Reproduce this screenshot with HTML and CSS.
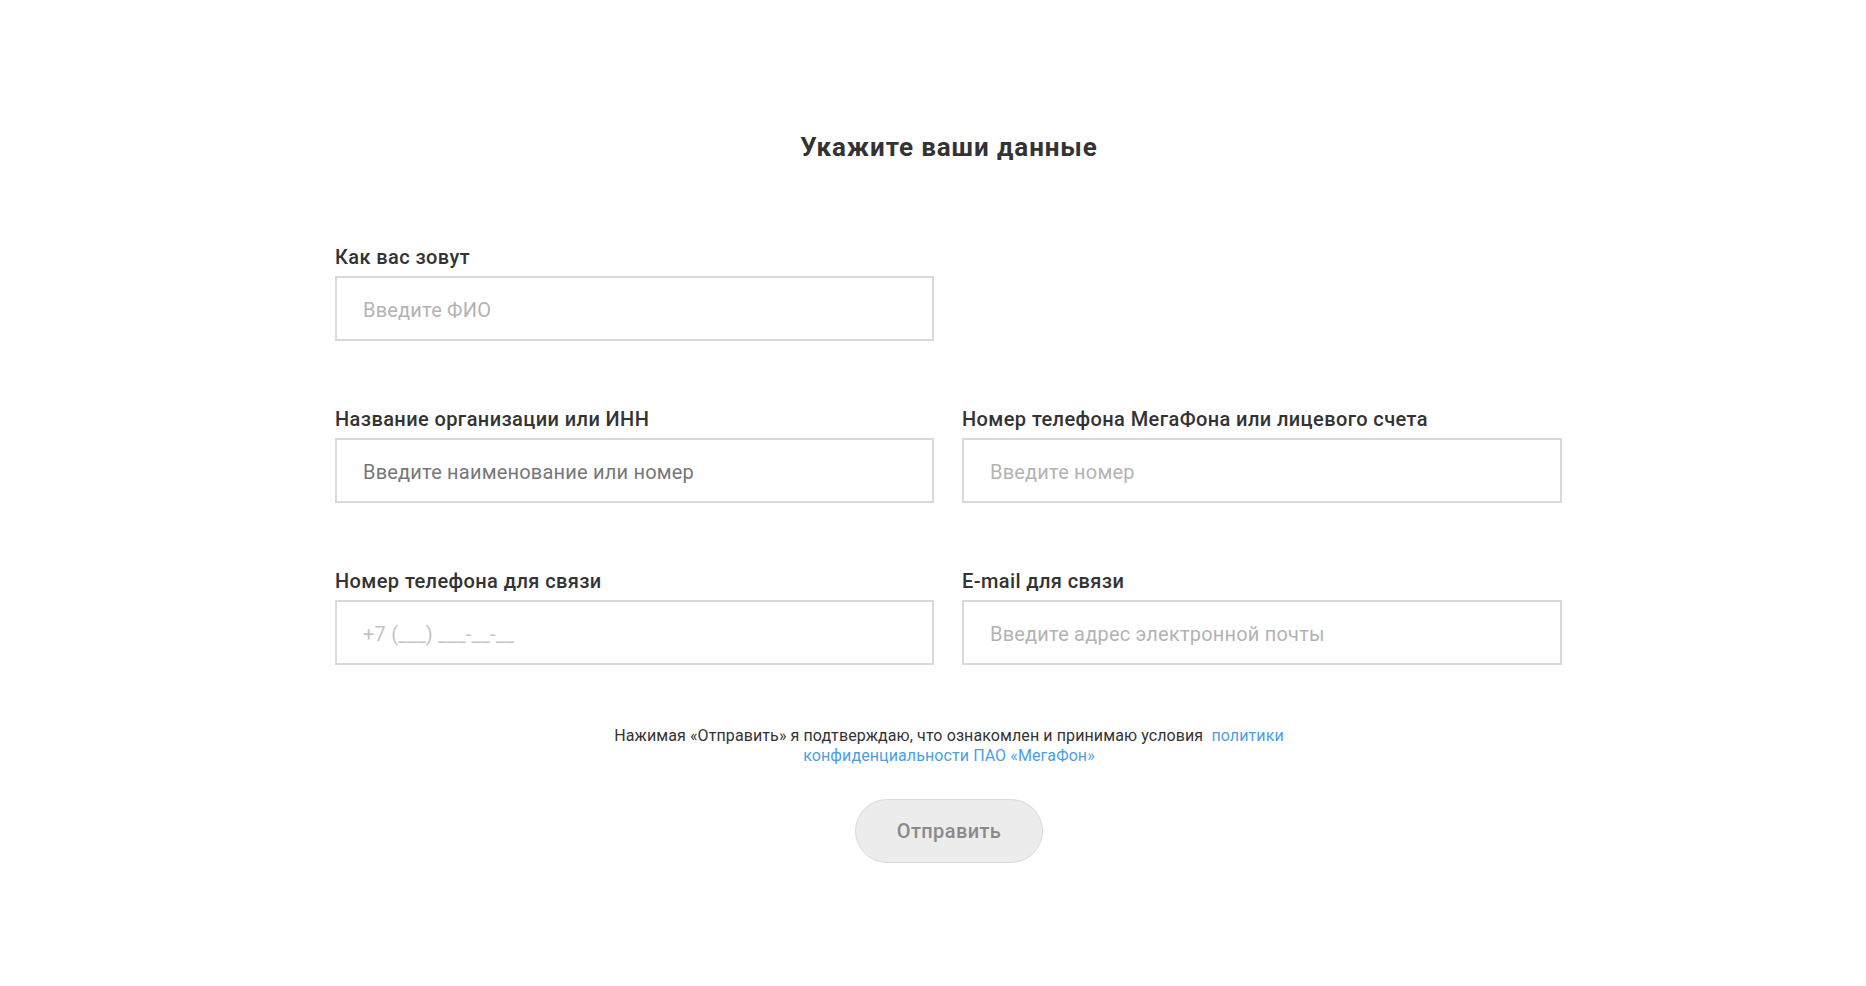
FILE: index.html
```html
<!DOCTYPE html>
<html lang="ru">
<head>
<meta charset="UTF-8">
<meta name="viewport" content="width=device-width, initial-scale=1.0">
<title>Укажите ваши данные</title>
<link rel="stylesheet" href="styles.css">
</head>
<body>

<div class="wrapper">
  <h2 class="title">Укажите ваши данные</h2>

  <form id="formulario" class="form">
    <div class="field">
      <label for="fio">Как вас зовут</label>
      <input type="text" id="fio" name="fio" placeholder="Введите ФИО">
    </div>
    <div class="field field-empty"></div>

    <div class="field">
      <label for="org">Название организации или ИНН</label>
      <input type="text" id="org" name="org" class="dark" placeholder="Введите наименование или номер">
    </div>
    <div class="field">
      <label for="account">Номер телефона МегаФона или лицевого счета</label>
      <input type="text" id="account" name="account" placeholder="Введите номер">
    </div>

    <div class="field">
      <label for="phone">Номер телефона для связи</label>
      <input type="text" id="phone" name="phone" class="light" placeholder="+7 (___) ___-__-__">
    </div>
    <div class="field">
      <label for="email">E-mail для связи</label>
      <input type="text" id="email" name="email" placeholder="Введите адрес электронной почты">
    </div>
  </form>

  <p class="agree">Нажимая «Отправить» я подтверждаю, что ознакомлен и принимаю условия&nbsp; <a href="#" class="agree-link">политики</a><br><a href="#" class="agree-link">конфиденциальности ПАО «МегаФон»</a></p>

  <div class="actions">
    <button type="submit" form="formulario" class="send">Отправить</button>
  </div>
</div>

</body>
</html>
```

FILE: styles.css
```css
body {
  font-family: Roboto, "Liberation Sans", sans-serif;
  background-color: #fff;
  color: #333;
  margin: 0;
  padding: 0;
}
.wrapper {
  width: 1228px;
  margin-left: 335px;
  padding-top: 132px;
}
.title {
  margin: 0;
  font-size: 26px;
  line-height: 30px;
  font-weight: 700;
  letter-spacing: 0.9px;
  text-align: center;
  color: #333;
}
.form {
  display: grid;
  grid-template-columns: 599px 600px;
  column-gap: 28px;
  row-gap: 66px;
  margin-top: 83px;
}
.field {
  display: flex;
  flex-direction: column;
}
.field label {
  font-size: 20px;
  line-height: 24px;
  font-weight: 500;
  letter-spacing: 0.4px;
  color: #333;
  margin-bottom: 7px;
}
.field input {
  height: 65px;
  box-sizing: border-box;
  border: 2px solid #d9d9d9;
  border-radius: 0;
  padding: 0 26px;
  padding-top: 2px;
  font-family: inherit;
  font-size: 20px;
  letter-spacing: 0.2px;
  color: #333;
  outline: none;
}
.field input::placeholder {
  color: #b3b3b3;
}
.field input.dark::placeholder {
  color: #777;
}
.field input.light::placeholder {
  color: #c4c4c4;
}
.agree {
  margin: 61px auto 0;
  width: 700px;
  font-size: 16px;
  line-height: 20px;
  letter-spacing: 0.1px;
  text-align: center;
  color: #333;
}
.agree-link {
  color: #4a9fe6;
  text-decoration: none;
}
.actions {
  display: flex;
  justify-content: center;
  margin-top: 33px;
}
.send {
  width: 188px;
  height: 64px;
  border: 1px solid #dadada;
  border-radius: 32px;
  background-color: #ececec;
  color: #8a8a8a;
  font-family: inherit;
  font-size: 20px;
  font-weight: 500;
  letter-spacing: 0.4px;
  cursor: pointer;
}
```
